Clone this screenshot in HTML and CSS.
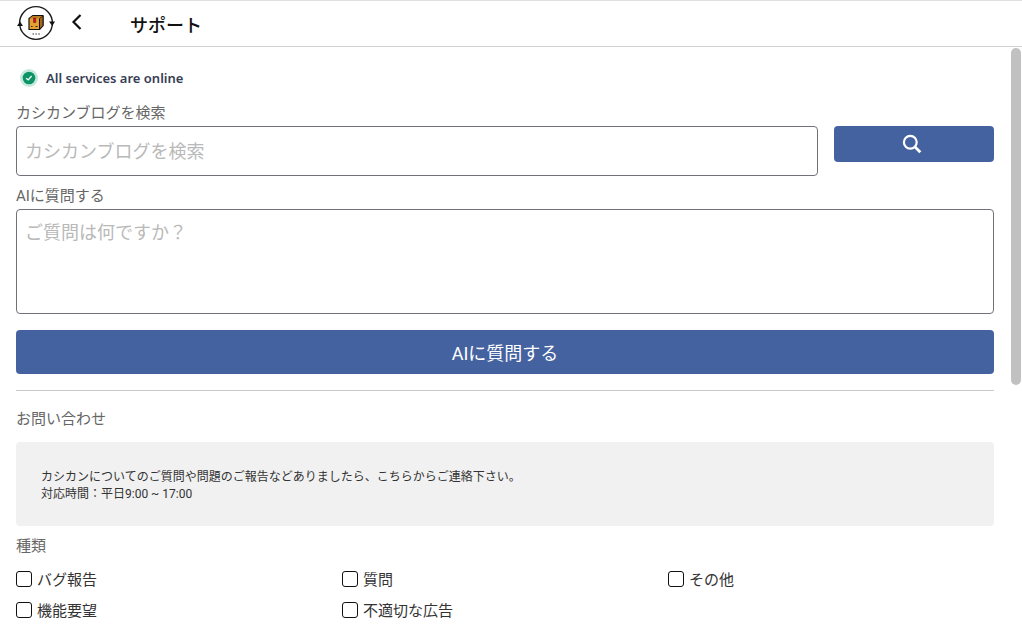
FILE: index.html
```html
<!DOCTYPE html>
<html lang="ja">
<head>
<meta charset="utf-8">
<meta name="viewport" content="width=device-width, initial-scale=1">
<title>サポート</title>
<link rel="stylesheet" href="styles.css">
</head>
<body>
<header class="header">
  <svg class="logo" viewBox="0 0 38 36" aria-hidden="true">
    <circle cx="19" cy="18" r="16.400" fill="none" stroke="#1a1a1a" stroke-width="1.400"/>
    <path d="M0 21 3 16.500 6 21ZM32 16.500 35.300 21 38 16.500Z" fill="#111"/>
    <path d="M12 13.500 16 10.500H26V20.500L22.500 24.500H12Z" fill="#e5a032" stroke="#111" stroke-width="1.200" stroke-linejoin="round"/>
    <path d="M22.500 13.500 26 10.500V20.500L22.500 24.500Z" fill="#a96819" stroke="#111" stroke-linejoin="round"/>
    <path d="M12.500 13.300 16 11H25L22.300 13.300Z" fill="#c07c20"/>
    <path d="M16.500 13H18.800V17.500H16.500Z" fill="#d4142a" stroke="#5a1010" stroke-width=".5"/>
    <path d="M14 21.500H15.500M18.500 21.500H20.500" stroke="#332008" stroke-width="1.200"/>
    <path d="M15.500 29H17M18.400 29H19.900M21.300 29H22.800" stroke="#777" stroke-width="1.500"/>
  </svg>
  <button class="back" type="button" aria-label="戻る">
    <svg width="12" height="18" viewBox="0 0 12 18" aria-hidden="true"><path d="M9.500 2 2.500 9 9.500 16" fill="none" stroke="#111" stroke-width="2.200"/></svg>
  </button>
  <h1 class="title">サポート</h1>
</header>
<div class="viewport">
  <main class="content">
    <div class="status">
      <svg width="18" height="18" viewBox="0 0 18 18" aria-hidden="true"><circle cx="9" cy="9" r="9" fill="#c5e8dc"/><circle cx="9" cy="9" r="6.300" fill="#0c9467"/><path d="M6.200 9.200 8.200 11 11.600 7" fill="none" stroke="#fff" stroke-width="1.200"/></svg>
      <span>All services are online</span>
    </div>
    <label class="label" for="blog">カシカンブログを検索</label>
    <div class="search">
      <input class="field" id="blog" type="text" placeholder="カシカンブログを検索">
      <button class="button button-search" type="button" aria-label="検索">
        <svg width="20" height="20" viewBox="0 0 20 20" aria-hidden="true"><circle cx="8.300" cy="8.300" r="6.400" fill="none" stroke="#fff" stroke-width="2.200"/><path d="M12.800 12.800 18.300 18.300" stroke="#fff" stroke-width="2.800"/></svg>
      </button>
    </div>
    <label class="label" for="question">AIに質問する</label>
    <textarea class="field question" id="question" placeholder="ご質問は何ですか？"></textarea>
    <button class="button button-ask" type="button">AIに質問する</button>
    <hr class="rule">
    <h2 class="heading">お問い合わせ</h2>
    <p class="notice">カシカンについてのご質問や問題のご報告などありましたら、こちらからご連絡下さい。<br>対応時間：平日9:00 ~ 17:00</p>
    <fieldset class="kinds">
      <legend class="label">種類</legend>
      <div class="options">
        <label class="option"><input type="checkbox">バグ報告</label>
        <label class="option"><input type="checkbox">質問</label>
        <label class="option"><input type="checkbox">その他</label>
        <label class="option"><input type="checkbox">機能要望</label>
        <label class="option"><input type="checkbox">不適切な広告</label>
      </div>
    </fieldset>
  </main>
  <div class="scrollbar"></div>
</div>
</body>
</html>
```
FILE: styles.css
```css
* {
  box-sizing: border-box;
}

body {
  display: flex;
  flex-direction: column;
  height: 100vh;
  margin: 0;
  overflow: hidden;
  background: #fff;
  color: #333;
  font-family: Roboto, "Noto Sans CJK JP", sans-serif;
  font-size: 15px;
}

button,
input,
textarea {
  margin: 0;
  font-family: inherit;
}

.header {
  display: flex;
  flex: none;
  align-items: flex-start;
  height: 47px;
  padding: 4px 17px 0;
  border-top: 1px solid #e0e0e0;
  border-bottom: 1px solid #d3d3d3;
}

.logo {
  width: 38px;
  height: 36px;
}

.back {
  display: flex;
  margin: 8px 0 0 16px;
  padding: 0;
  border: 0;
  background: none;
}

.title {
  margin: 8px 0 0 47px;
  color: #111;
  font-size: 18px;
  font-weight: 500;
  line-height: 26px;
}

.viewport {
  position: relative;
  flex: 1;
  min-height: 0;
  overflow: hidden;
}

.content {
  display: flex;
  flex-direction: column;
  padding: 20px 28px 16px 16px;
}

.status {
  display: flex;
  align-items: center;
  gap: 8px;
  height: 22px;
  margin-bottom: 12px;
  padding-left: 4px;
  color: #373d54;
  font-family: "Noto Sans", sans-serif;
  font-size: 13px;
  font-weight: 600;
}

.label {
  display: block;
  padding: 0;
  color: #666;
  font-size: 15px;
  line-height: 24px;
}

.search {
  display: flex;
  align-items: flex-start;
  gap: 16px;
  margin: 1px 0 8px;
}

.field {
  width: 100%;
  height: 50px;
  padding: 8px;
  border: 1px solid #71717a;
  border-radius: 4px;
  background: #fff;
  color: #333;
  font-size: 18px;
  line-height: 30px;
}

.field::placeholder {
  color: #b9b9b9;
}

.question {
  display: block;
  height: 105px;
  margin: 1px 0 16px;
  resize: none;
}

.button {
  display: flex;
  align-items: center;
  justify-content: center;
  border: 0;
  border-radius: 4px;
  background: #4562a0;
  color: #fff;
  font-size: 18px;
}

.button-search {
  flex: 0 0 160px;
  height: 36px;
  padding: 0 10px 0 6px;
}

.button-ask {
  height: 44px;
}

.rule {
  width: 100%;
  margin: 16px 0;
  border: 0;
  border-top: 1px solid #c8c8c8;
}

.heading {
  margin: 0 0 11px;
  color: #666;
  font-size: 15px;
  font-weight: 400;
  line-height: 24px;
}

.notice {
  margin: 0 0 8px;
  padding: 27px 25px 23px;
  border-radius: 4px;
  background: #f1f1f1;
  font-size: 12px;
  line-height: 17px;
}

.kinds {
  min-width: 0;
  margin: 0;
  padding: 0;
  border: 0;
}

.options {
  display: grid;
  grid-template-columns: repeat(3, 1fr);
  row-gap: 9px;
  padding-top: 11px;
}

.option {
  display: flex;
  align-items: flex-start;
  gap: 5px;
  line-height: 22px;
}

.option input {
  width: 16px;
  height: 16px;
  margin-top: 2px;
  border: 1px solid #111;
  border-radius: 3px;
  background: #fff;
  appearance: none;
}

.option input:checked {
  background: #4562a0;
}

.scrollbar {
  position: absolute;
  top: 1px;
  right: 1px;
  width: 10px;
  height: 337px;
  border-radius: 5px;
  background: #c1c1c1;
}
```
